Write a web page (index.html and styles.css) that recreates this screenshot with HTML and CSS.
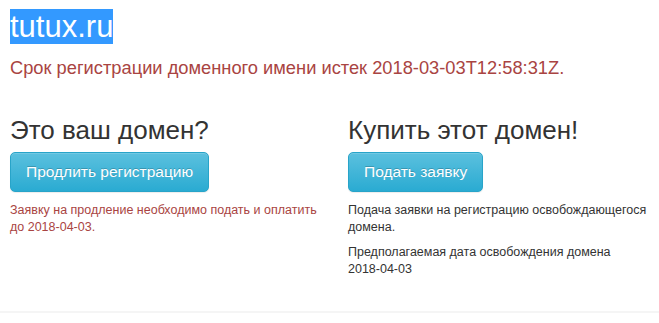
FILE: index.html
```html
<!DOCTYPE html>
<html lang="ru">
<head>
<meta charset="UTF-8">
<meta name="viewport" content="width=device-width, initial-scale=1.0">
<title>tutux.ru</title>
<link rel="stylesheet" href="styles.css">
</head>
<body>
    <div class="page">
        <h1 class="domain"><span class="selected">tutux.ru</span></h1>
        <p class="expired">Срок регистрации доменного имени истек 2018-03-03T12:58:31Z.</p>

        <div class="columns">
            <div class="col">
                <h2>Это ваш домен?</h2>
                <button type="button" class="btn">Продлить регистрацию</button>
                <p class="note danger">Заявку на продление необходимо подать и оплатить до 2018-04-03.</p>
            </div>
            <div class="col">
                <h2>Купить этот домен!</h2>
                <button type="button" class="btn">Подать заявку</button>
                <p class="note">Подача заявки на регистрацию освобождающегося домена.</p>
                <p class="note">Предполагаемая дата освобождения домена <span class="date">2018-04-03</span></p>
            </div>
        </div>
    </div>
    <div class="footer"></div>
</body>
</html>
```

FILE: styles.css
```css
body {
    margin: 0;
    font-family: "Liberation Sans", Arial, sans-serif;
    color: #333;
    background-color: #fff;
}
.page {
    padding: 0 10px;
    height: 311px;
}
.domain {
    margin: 0;
    padding-top: 9px;
    font-size: 31px;
    font-weight: normal;
    line-height: 36px;
}
.selected {
    background-color: #3399ff;
    color: #fff;
}
.expired {
    margin: 11px 0 0;
    font-size: 18.3px;
    line-height: 24px;
    color: #a94442;
}
.columns {
    display: grid;
    grid-template-columns: 338px 1fr;
    margin-top: 35px;
}
.col h2 {
    margin: 0;
    font-size: 26px;
    font-weight: normal;
    line-height: 30px;
    color: #333;
}
.btn {
    margin-top: 7px;
    padding: 10px 15px;
    font-family: inherit;
    font-size: 15.5px;
    line-height: 18px;
    color: #fff;
    background-image: linear-gradient(to bottom, #5bc0de 0, #2aabd2 100%);
    border: 1px solid #28a4c9;
    border-radius: 5px;
    box-shadow: inset 0 1px 0 rgba(255, 255, 255, .15), 0 1px 1px rgba(0, 0, 0, .075);
    text-shadow: 0 -1px 0 rgba(0, 0, 0, .2);
    cursor: pointer;
}
.note {
    margin: 10px 0 0;
    font-size: 12.5px;
    line-height: 17px;
    max-width: 310px;
}
.note + .note {
    margin-top: 8px;
}
.date {
    white-space: nowrap;
}
.danger {
    color: #a94442;
}
.footer {
    border-top: 2px solid #f5f5f5;
    height: 10px;
}
```
